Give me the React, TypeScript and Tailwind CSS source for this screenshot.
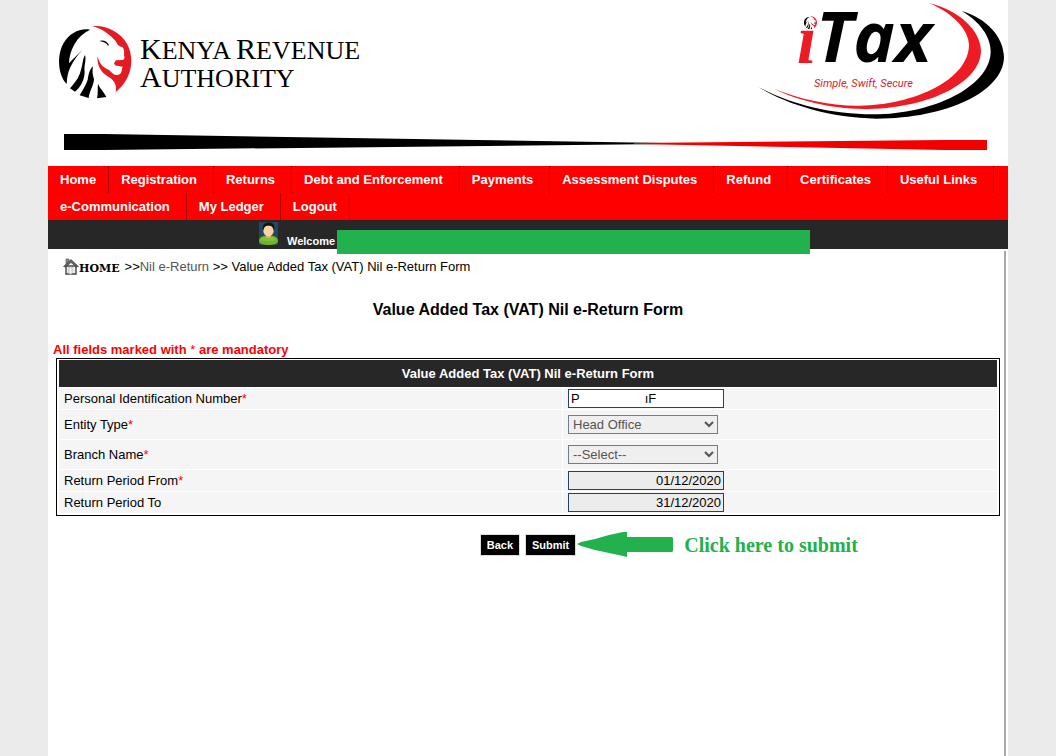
import React from "react";

type MenuItem = { label: string; compact?: boolean };

const MENU: MenuItem[] = [
  { label: "Home", compact: true },
  { label: "Registration" },
  { label: "Returns" },
  { label: "Debt and Enforcement" },
  { label: "Payments" },
  { label: "Assessment Disputes" },
  { label: "Refund" },
  { label: "Certificates" },
  { label: "Useful Links" },
  { label: "e-Communication" },
  { label: "My Ledger" },
  { label: "Logout", compact: true },
];

const MASKED_PIN = "P" + "\u00a0".repeat(18) + "\u0131F";

function LionShapes() {
  return (
    <>
      <path
        fill="#000"
        d="M120 44 C92 38 58 54 41 84 C21 118 22 178 50 207 C51 186 54 172 61 157 C70 137 84 118 98 105 C86 115 70 131 57 145 C58 106 80 62 120 44Z"
      />
      <path
        fill="#000"
        d="M105 120 C97 133 99 148 92 168 C86 190 73 205 60 220 L75 230 C91 217 104 194 104 170 C101 150 110 137 105 120Z"
      />
      <path
        fill="#000"
        d="M129 154 C117 166 116 180 113 194 C107 212 98 224 89 241 L116 249 C118 229 131 213 132 193 C128 180 126 169 129 154Z"
      />
      <path fill="#000" d="M144 206 C150 222 163 231 169 246 L141 250 C145 235 142 222 144 206Z" />
      <path fill="#000" d="M147 78 C157 74 170 76 177 90 L174 92 C168 82 158 80 147 78Z" />
      <path
        fill="#e31b23"
        d="M127 34 C165 29 209 49 231 86 C257 135 243 195 197 231 C201 211 194 198 180 188 C160 177 141 162 142 123 C148 143 157 158 176 164 C184 170 190 180 200 180 C214 180 215 171 216 160 L219 156 C211 153 203 154 195 151 L192 145 L198 136 L218 135 C224 134 225 128 222 121 C223 112 223 104 218 97 C204 93 201 86 196 77 C180 60 158 41 127 34Z"
      />
    </>
  );
}

function KraLogo() {
  return (
    <div className="flex items-start">
      <svg viewBox="0 0 270 270" className="h-[90px] w-[90px] shrink-0" aria-hidden="true">
        <LionShapes />
      </svg>
      <p className="mt-[22px] font-['Liberation_Serif',serif] text-[26px] leading-[28px] whitespace-nowrap text-black">
        <span className="text-[30px] leading-[20px]">K</span>ENYA{" "}
        <span className="text-[30px] leading-[20px]">R</span>EVENUE
        <br />
        <span className="text-[30px] leading-[20px]">A</span>UTHORITY
      </p>
    </div>
  );
}

function ITaxLogo() {
  return (
    <svg viewBox="0 0 268 128" className="h-[128px] w-[268px] shrink-0" role="img" aria-label="iTax">
      <g transform="scale(0.33333)">
        <path
          fill="#ed1c24"
          d="M567 9 C655 30 722 90 723 152 C722 250 560 327 370 327 C270 326 170 300 103 267 C180 298 270 318 360 317 C520 315 686 240 687 135 C686 90 640 40 567 9Z"
        />
        <path
          fill="#000"
          d="M665 33 C740 55 791 110 792 172 C790 275 620 356 410 356 C270 355 130 310 56 261 C150 312 270 343 400 343 C580 342 750 260 752 155 C752 110 720 65 665 33Z"
        />
        <g transform="translate(187 43) scale(0.18)">
          <LionShapes />
        </g>
      </g>
      <text x="57" y="63" fill="#ed1c24" className="font-['Liberation_Serif',serif] text-[70px] font-bold italic">
        ı
      </text>
      <text x="76" y="62" fill="#000" className="font-['Open_Sans','Noto_Sans',sans-serif] text-[70px] font-bold italic">
        Tax
      </text>
      <text x="74" y="87" fill="#d2232a" className="font-['Roboto',sans-serif] text-[11px] italic">
        Simple, Swift, Secure
      </text>
    </svg>
  );
}

function Divider() {
  return (
    <svg viewBox="0 0 923 16" preserveAspectRatio="none" className="mr-[21px] ml-4 block h-4" aria-hidden="true">
      <path fill="#000" d="M0 0 L40 0 L600 9 L600 10 L40 16 L0 16Z" />
      <path fill="#f20000" d="M570 9 L880 6 L923 6 L923 16 L880 16 L570 10Z" />
    </svg>
  );
}

function UserIcon() {
  return (
    <svg viewBox="0 0 19 23" className="mt-0.5 h-[23px] w-[19px] shrink-0" aria-hidden="true">
      <rect width="19" height="23" fill="#234761" />
      <path d="M0 19 C0 15 4 13.500 9.500 13.500 C15 13.500 19 15 19 19 C19 22 14 23 9.500 23 C5 23 0 22 0 19Z" fill="#6fb52c" />
      <path d="M1.500 18 C3 15 6 14.500 9.500 14.500 C13 14.500 16 15 17.500 18 C14 19.500 5 19.500 1.500 18Z" fill="#84c03a" />
      <path d="M7 12 H12 V15 C11 16.500 8 16.500 7 15Z" fill="#e9a66b" />
      <ellipse cx="9.500" cy="8.500" rx="5.200" ry="6" fill="#fbd3a4" />
      <path d="M4.300 8.500 C2.500 3 6 0.200 10 0.500 C14.500 0 16.500 4 14.700 8.500 C14.200 5 12.500 3.500 9.500 3.800 C6.500 3.500 4.800 5 4.300 8.500Z" fill="#17130f" />
    </svg>
  );
}

function HouseIcon() {
  return (
    <svg viewBox="0 0 16 17" className="h-[17px] w-4 shrink-0" aria-hidden="true">
      <path d="M3 1 H6 V5 L3 7Z" fill="#8a8a8a" stroke="#555" strokeWidth="0.600" />
      <path d="M3 8 H13 V16 H3Z" fill="#eee" stroke="#444" strokeWidth="1.400" />
      <path d="M6 9 H9 V16 H6Z" fill="#fff" stroke="#999" strokeWidth="0.700" />
      <path d="M0.500 8.500 L8 1.500 L15.500 8.500 L13.500 9 L8 4.500 L2.500 9Z" fill="#666" stroke="#333" strokeWidth="0.600" />
    </svg>
  );
}

const LABEL_CELL = "bg-[#f5f5f5] pl-[5px] text-left font-normal";
const FIELD_CELL = "bg-[#f5f5f5] pl-[5px]";
const INPUT = "block h-[19px] w-[156px] rounded-none border border-[#23435f] px-[2px] text-[13px] text-black";
const SELECT =
  "block h-[19px] w-[150px] rounded-none border border-[#6a8092] bg-[#efefef] text-[13px] text-[#545454] disabled:opacity-100";

function Row({
  id,
  label,
  required,
  tall,
  children,
}: {
  id: string;
  label: string;
  required?: boolean;
  tall?: boolean;
  children: React.ReactNode;
}) {
  return (
    <tr className={tall ? "h-[29px]" : "h-[21px]"}>
      <th scope="row" className={LABEL_CELL}>
        <label htmlFor={id}>
          {label}
          {required && <span className="text-[#f00]">*</span>}
        </label>
      </th>
      <td className={FIELD_CELL}>{children}</td>
    </tr>
  );
}

export default function App() {
  return (
    <div className="min-h-screen bg-[#ebebeb] font-['Liberation_Sans',Arial,sans-serif] text-[13px] leading-[15px] text-black">
      <div className="mx-auto flex min-h-screen max-w-[960px] flex-col bg-white">
        <header>
          <div className="flex h-[134px] items-start justify-between">
            <div className="pt-[15px] pl-[2px]">
              <KraLogo />
            </div>
            <ITaxLogo />
          </div>
          <Divider />
          <nav className="mt-4 bg-[#f00]">
            <ul className="flex flex-wrap">
              {MENU.map((item) => (
                <li key={item.label} className="border-r border-[#a80000]">
                  <a
                    href="#"
                    className={
                      item.compact
                        ? "block h-[27px] px-3 text-[13px] leading-[27px] font-bold text-white"
                        : "block h-[27px] pr-4 pl-3 text-[13px] leading-[27px] font-bold text-white"
                    }
                  >
                    {item.label}
                  </a>
                </li>
              ))}
            </ul>
          </nav>
          <div className="relative flex h-[29px] bg-[#272727] pl-[211px]">
            <UserIcon />
            <span className="ml-[9px] pt-[14px] text-[11px] font-bold text-white">Welcome</span>
            <div className="absolute top-[10px] left-[289px] h-6 w-[473px] bg-[#22b14c]" />
          </div>
        </header>

        <main className="mt-[2px] mr-[2px] flex-1 border-r-2 border-[#a9a9a9] pr-1 pl-2">
          <nav className="flex h-[30px] items-center pl-[7px]" aria-label="Breadcrumb">
            <a href="#" className="flex items-center">
              <HouseIcon />
              <span className="pt-1 font-['DejaVu_Serif',serif] text-[11px] font-bold">HOME</span>
            </a>
            <span className="ml-[5px]">
              &gt;&gt;
              <a href="#" className="text-[#555]">
                Nil e-Return
              </a>{" "}
              &gt;&gt; Value Added Tax (VAT) Nil e-Return Form
            </span>
          </nav>

          <h1 className="mt-[19px] text-center text-[16px] leading-[20px] font-bold">
            Value Added Tax (VAT) Nil e-Return Form
          </h1>

          <form onSubmit={(e) => e.preventDefault()}>
            <p className="mt-[22px] -ml-[3px] font-bold text-[#f00]">
              All fields marked with <span className="font-normal">*</span> are mandatory
            </p>
            <div className="mt-px border border-black px-px pb-px">
              <table className="w-full table-fixed border-separate border-spacing-px">
                <colgroup>
                  <col className="w-[503px]" />
                  <col />
                </colgroup>
                <thead>
                  <tr className="h-[27px]">
                    <th colSpan={2} className="bg-[#272727] text-center font-bold text-white">
                      Value Added Tax (VAT) Nil e-Return Form
                    </th>
                  </tr>
                </thead>
                <tbody>
                  <Row id="pin" label="Personal Identification Number" required>
                    <input id="pin" type="text" defaultValue={MASKED_PIN} className={INPUT + " bg-white"} />
                  </Row>
                  <Row id="entity" label="Entity Type" required tall>
                    <select id="entity" disabled className={SELECT}>
                      <option>Head Office</option>
                    </select>
                  </Row>
                  <Row id="branch" label="Branch Name" required tall>
                    <select id="branch" disabled className={SELECT}>
                      <option>--Select--</option>
                    </select>
                  </Row>
                  <Row id="from" label="Return Period From" required>
                    <input
                      id="from"
                      type="text"
                      readOnly
                      defaultValue="01/12/2020"
                      className={INPUT + " bg-[#ececec] text-right"}
                    />
                  </Row>
                  <Row id="to" label="Return Period To">
                    <input
                      id="to"
                      type="text"
                      readOnly
                      defaultValue="31/12/2020"
                      className={INPUT + " bg-[#ececec] text-right"}
                    />
                  </Row>
                </tbody>
              </table>
            </div>
            <div className="mt-[18px] flex justify-center">
              <div className="relative flex gap-[5px]">
                <button
                  type="button"
                  className="h-[22px] border border-[#ddd] bg-black px-[6px] text-[11px] font-bold text-white"
                >
                  Back
                </button>
                <button
                  type="submit"
                  className="h-[22px] border border-[#ddd] bg-black px-[6px] text-[11px] font-bold text-white"
                >
                  Submit
                </button>
                <div className="absolute -top-[2px] left-full ml-px flex items-center gap-[11px]">
                  <svg viewBox="0 0 96 25" className="h-[25px] w-24 shrink-0" aria-hidden="true">
                    <path
                      fill="#22b14c"
                      d="M0 12 L4 10 L18 7 L32 3 L46 0 L50 0 L50 5 L95 5 L96 6 L96 19 L95 20 L50 20 L50 25 L46 24 L32 21 L18 18 L4 14Z"
                    />
                  </svg>
                  <span className="font-['Liberation_Serif',serif] text-[20px] leading-[24px] font-bold whitespace-nowrap text-[#22b14c]">
                    Click here to submit
                  </span>
                </div>
              </div>
            </div>
          </form>
        </main>
      </div>
    </div>
  );
}
